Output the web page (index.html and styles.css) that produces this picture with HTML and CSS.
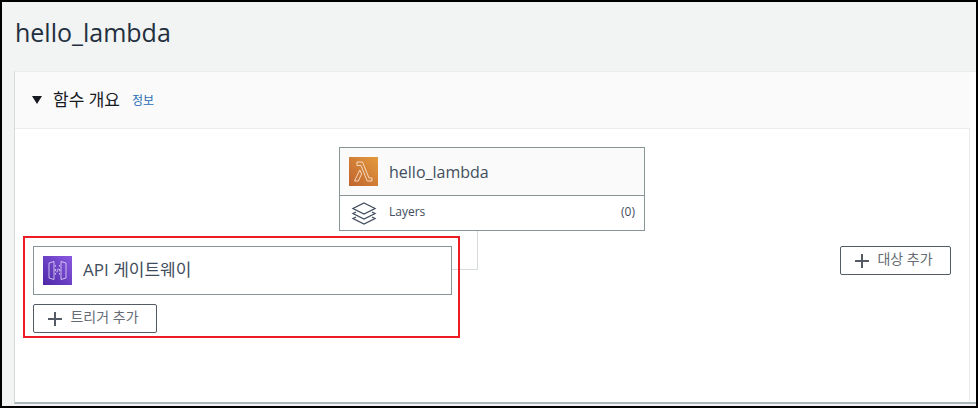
FILE: index.html
```html
<!DOCTYPE html>
<html lang="ko">
<head>
    <meta charset="UTF-8">
    <title>hello_lambda</title>
    <link rel="stylesheet" href="styles.css">
</head>
<body>

<div class="frame">
    <h1 class="page-title">hello_lambda</h1>

    <div class="panel">
        <div class="panel-header">
            <span class="caret"></span>
            <h2>함수 개요</h2>
            <a class="info-link">정보</a>
        </div>

        <div class="diagram">
            <div class="lines"></div>

            <div class="node function-node">
                <div class="node-main">
                    <svg class="service-icon" viewBox="0 0 29 29">
                        <defs>
                            <linearGradient id="lambdaBg" x1="0" y1="1" x2="1" y2="0">
                                <stop offset="0" stop-color="#bf6330"/>
                                <stop offset="1" stop-color="#e59a3c"/>
                            </linearGradient>
                        </defs>
                        <rect width="29" height="29" fill="url(#lambdaBg)"/>
                        <path d="M8 5h5.500l6.500 16h3v3h-4.800L12 8.500H8zM10.800 13l1.800 4-3.300 7H5.500z" fill="none" stroke="#f7e3cf" stroke-width="0.9"/>
                    </svg>
                    <span class="node-name">hello_lambda</span>
                </div>
                <div class="node-layers">
                    <svg class="layers-icon" viewBox="0 0 26 23" fill="none" stroke="#414d5c" stroke-width="1.300">
                        <path d="M13 1l11 5.500-11 5.500L2 6.500z"/>
                        <path d="M5 10l-3 1.500 11 5.500L24 11.500 21 10"/>
                        <path d="M5 15l-3 1.500 11 5.500 11-5.500-3-1.500"/>
                    </svg>
                    <span>Layers</span>
                    <span class="count">(0)</span>
                </div>
            </div>

            <div class="trigger-group">
                <div class="node trigger-node">
                    <svg class="service-icon" viewBox="0 0 29 29">
                        <defs>
                            <linearGradient id="apiBg" x1="0" y1="1" x2="1" y2="0">
                                <stop offset="0" stop-color="#4d27a8"/>
                                <stop offset="1" stop-color="#8a5ae0"/>
                            </linearGradient>
                        </defs>
                        <rect width="29" height="29" fill="url(#apiBg)"/>
                        <path d="M11 5.500v18l-5-1.500v-15zM18 5.500v18l5-1.500v-15z" fill="none" stroke="#e6dcfa" stroke-width="0.8"/>
                        <path d="M12.500 9v1.500M12.500 13v1.500M12.500 17v1.500M16.500 9v1.500M16.500 13v1.500M16.500 17v1.500" stroke="#e6dcfa" stroke-width="0.8"/>
                        <path d="M13 13.500l-1 1 1 1M16 13.500l1 1-1 1M15.200 12.500l-1.400 4" fill="none" stroke="#e6dcfa" stroke-width="0.7"/>
                    </svg>
                    <span class="node-name api-name">API 게이트웨이</span>
                </div>
                <button class="add-btn trigger-btn"><span class="plus"></span><span class="btn-label">트리거 추가</span></button>
            </div>

            <button class="add-btn target-btn"><span class="plus"></span><span class="btn-label">대상 추가</span></button>

            <div class="highlight"></div>
        </div>
    </div>
</div>

</body>
</html>
```

FILE: styles.css
```css
* {
    box-sizing: border-box;
}

html, body {
    margin: 0;
    height: 100%;
    background-color: #000;
}

body {
    padding: 2px;
    font-family: "Open Sans", "Noto Sans CJK KR", sans-serif;
    color: #16191f;
}

.frame {
    height: 404px;
    background-color: #f2f3f3;
    padding-left: 12px;
    overflow: hidden;
}

.page-title {
    margin: 0;
    height: 69px;
    padding: 13px 0 0 1px;
    font-size: 25px;
    line-height: 34px;
    font-weight: 400;
    color: #232f3e;
}

.panel {
    width: 962px;
    height: 333px;
    background-color: #fff;
    border-left: 1px solid #d5dbdb;
    border-top: 1px solid #eaeded;
    border-bottom: 2px solid #aab7b8;
}

.panel-header {
    display: flex;
    align-items: center;
    height: 57px;
    padding-left: 17px;
    background-color: #fafafa;
    border-bottom: 1px solid #eaeded;
    margin-right: 6px;
}

.caret {
    width: 0;
    height: 0;
    border-left: 5px solid transparent;
    border-right: 5px solid transparent;
    border-top: 8px solid #16191f;
    margin-right: 11px;
}

.panel-header h2 {
    margin: 0 0 4px;
    font-size: 17px;
    font-weight: 400;
    color: #16191f;
}

.info-link {
    margin-left: 12px;
    font-size: 12px;
    color: #2a6cb5;
}

.diagram {
    position: relative;
    height: 273px;
    border-right: 1px solid #eaeded;
    margin-right: 6px;
}

.node {
    background-color: #fafafa;
    border: 1px solid #879596;
}

.function-node {
    position: absolute;
    left: 324px;
    top: 18px;
    width: 306px;
    height: 84px;
    background-color: #fff;
}

.node-main {
    display: flex;
    align-items: center;
    height: 48px;
    padding-left: 9px;
    background-color: #fafafa;
    border-bottom: 1px solid #879596;
}

.service-icon {
    width: 29px;
    height: 29px;
    flex-shrink: 0;
}

.node-name {
    margin-left: 11px;
    font-size: 16px;
    color: #414d5c;
}

.api-name {
    font-size: 17px;
    margin-bottom: 4px;
}

.node-layers {
    display: flex;
    align-items: center;
    height: 34px;
    padding: 0 9px 0 11px;
    font-size: 12px;
    color: #414d5c;
}

.node-layers span {
    margin-bottom: 3px;
}

.layers-icon {
    width: 26px;
    height: 23px;
    margin-right: 12px;
}

.node-layers .count {
    margin-left: auto;
}

.lines {
    position: absolute;
    left: 436px;
    top: 102px;
    width: 27px;
    height: 39px;
    border-right: 1px solid #d5dbdb;
    border-bottom: 1px solid #d5dbdb;
}

.trigger-group {
    position: absolute;
    left: 18px;
    top: 117px;
    width: 419px;
}

.trigger-node {
    display: flex;
    align-items: center;
    height: 49px;
    padding-left: 9px;
    background-color: #fff;
}

.add-btn {
    display: flex;
    align-items: center;
    justify-content: center;
    height: 29px;
    padding: 0 3px 0 0;
    background-color: #fff;
    border: 1px solid #545b64;
    border-radius: 2px;
    font-family: inherit;
    font-size: 14px;
    color: #666c75;
}

.btn-label {
    margin-bottom: 6px;
}

.trigger-btn {
    width: 124px;
    margin-top: 9px;
}

.target-btn {
    position: absolute;
    left: 825px;
    top: 117px;
    width: 111px;
}

.plus {
    position: relative;
    width: 14px;
    height: 14px;
    margin: 1px 8px 0 0;
}

.plus::before, .plus::after {
    content: "";
    position: absolute;
    background-color: #545b64;
}

.plus::before {
    left: 0;
    top: 6px;
    width: 14px;
    height: 2px;
}

.plus::after {
    left: 6px;
    top: 0;
    width: 2px;
    height: 14px;
}

.highlight {
    position: absolute;
    left: 8px;
    top: 107px;
    width: 437px;
    height: 102px;
    border: 2px solid #ed1c24;
    pointer-events: none;
}
```
